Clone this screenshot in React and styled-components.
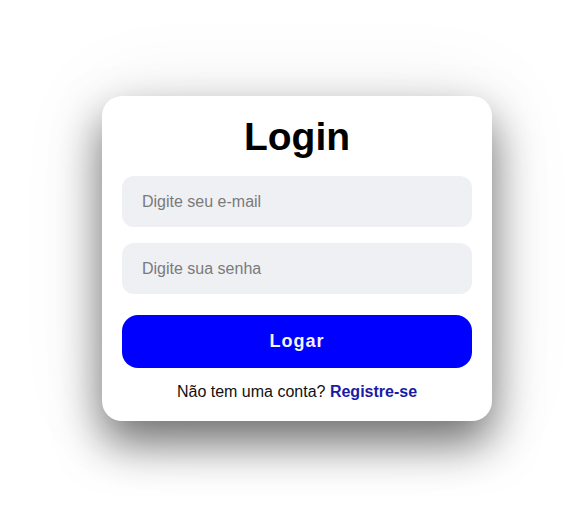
import React from 'react'
import styled, { createGlobalStyle } from 'styled-components'

const GlobalStyle = createGlobalStyle`
  body {
    margin: 0;
    background: #ffffff;
    font-family: "Liberation Sans", Arial, sans-serif;
  }
`
const Page = styled.div`
  display: flex;
  justify-content: center;
  align-items: center;
  min-height: 509px;
  box-sizing: border-box;
  padding: 8px 0 0 10px;
`
const Card = styled.form`
  display: flex;
  flex-direction: column;
  align-items: stretch;
  width: 390px;
  box-sizing: border-box;
  padding: 18px 20px 20px;
  background: #ffffff;
  border-radius: 20px;
  box-shadow: 0 22px 45px rgba(0, 0, 0, 0.55), 0 0 90px rgba(0, 0, 0, 0.08);
`
const Title = styled.h1`
  margin: 0 0 16px;
  font-size: 39px;
  line-height: 46px;
  font-weight: 700;
  text-align: center;
  color: #000;
`
const Input = styled.input`
  height: 51px;
  margin-bottom: ${(p) => p.$gap || 16}px;
  padding: 0 20px;
  border: none;
  border-radius: 12px;
  background: #eff0f4;
  font-family: inherit;
  font-size: 16px;
  color: #333;
  outline: none;
  &::placeholder {
    color: #7a7a7a;
  }
`
const Button = styled.button`
  height: 53px;
  border: none;
  border-radius: 16px;
  background: #0000ff;
  color: #f4f4ff;
  font-family: inherit;
  font-size: 18px;
  font-weight: 700;
  letter-spacing: 1px;
  cursor: pointer;
`
const Footer = styled.p`
  margin: 15px 0 0;
  text-align: center;
  font-size: 16px;
  line-height: 18px;
  color: #111;
`
const Link = styled.a`
  color: #1a1aa8;
  font-weight: 700;
  text-decoration: none;
`

export default function App() {
  return (
    <>
      <GlobalStyle />
      <Page>
        <Card onSubmit={(e) => e.preventDefault()}>
          <Title>Login</Title>
          <Input type="email" placeholder="Digite seu e-mail" />
          <Input type="password" placeholder="Digite sua senha" $gap={21} />
          <Button type="submit">Logar</Button>
          <Footer>
            Não tem uma conta? <Link href="#">Registre-se</Link>
          </Footer>
        </Card>
      </Page>
    </>
  )
}
